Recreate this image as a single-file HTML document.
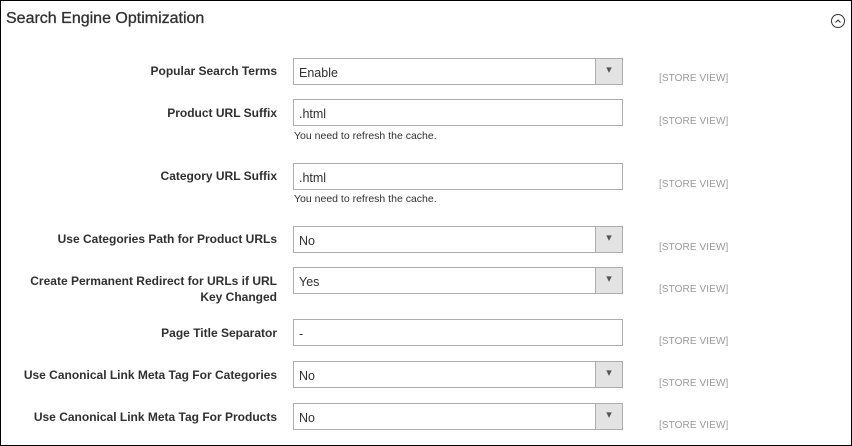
<!DOCTYPE html>
<html><head><style>
body{margin:0;width:852px;height:446px;overflow:hidden;background:#fff;font-family:"Liberation Sans",sans-serif}
.f{position:absolute;left:0;top:0;width:850px;height:444px;border:1px solid #000}
.t{position:absolute;left:6px;top:10px;font-size:16px;color:#303030;-webkit-text-stroke:0.3px #303030}
.ic{position:absolute;left:831px;top:14px;width:12px;height:12px;border:1px solid #333;border-radius:50%}
.l{position:absolute;right:575px;font-size:12px;font-weight:bold;color:#303030;text-align:right;letter-spacing:0px;line-height:16px}
.i{position:absolute;left:293px;width:330px;height:27px;border:1px solid #adadad;box-sizing:border-box;font-size:12.5px;color:#303030;padding:7px 0 0 5px}
.s:after{content:"▾";position:absolute;right:0;top:0;width:26px;height:25px;background:#e3e3e3;border-left:1px solid #adadad;font-size:11px;text-align:center;line-height:22px;color:#555}
.v{position:absolute;left:659px;font-size:10px;color:#999;letter-spacing:0.1px}
.n{position:absolute;left:294px;font-size:10.5px;color:#303030}
</style></head><body>
<div class="f"></div>
<div class="t">Search Engine Optimization</div>
<div class="ic"><svg width="12" height="12" style="position:absolute;left:0;top:0"><path d="M3.5 7.5L6 5L8.5 7.5" fill="none" stroke="#333" stroke-width="1"/></svg></div>

<div class="l" style="top:63px">Popular Search Terms</div>
<div class="i s" style="top:58px">Enable</div>
<div class="v" style="top:73px">[STORE VIEW]</div>

<div class="l" style="top:105px">Product URL Suffix</div>
<div class="i" style="top:99px">.html</div>
<div class="n" style="top:130px">You need to refresh the cache.</div>
<div class="v" style="top:116px">[STORE VIEW]</div>

<div class="l" style="top:168px">Category URL Suffix</div>
<div class="i" style="top:163px">.html</div>
<div class="n" style="top:193px">You need to refresh the cache.</div>
<div class="v" style="top:179px">[STORE VIEW]</div>

<div class="l" style="top:231px">Use Categories Path for Product URLs</div>
<div class="i s" style="top:226px">No</div>
<div class="v" style="top:242px">[STORE VIEW]</div>

<div class="l" style="top:273px">Create Permanent Redirect for URLs if URL<br>Key Changed</div>
<div class="i s" style="top:267px">Yes</div>
<div class="v" style="top:284px">[STORE VIEW]</div>

<div class="l" style="top:325px">Page Title Separator</div>
<div class="i" style="top:319px">-</div>
<div class="v" style="top:336px">[STORE VIEW]</div>

<div class="l" style="top:367px">Use Canonical Link Meta Tag For Categories</div>
<div class="i s" style="top:361px">No</div>
<div class="v" style="top:378px">[STORE VIEW]</div>

<div class="l" style="top:409px">Use Canonical Link Meta Tag For Products</div>
<div class="i s" style="top:403px">No</div>
<div class="v" style="top:420px">[STORE VIEW]</div>
</body></html>
